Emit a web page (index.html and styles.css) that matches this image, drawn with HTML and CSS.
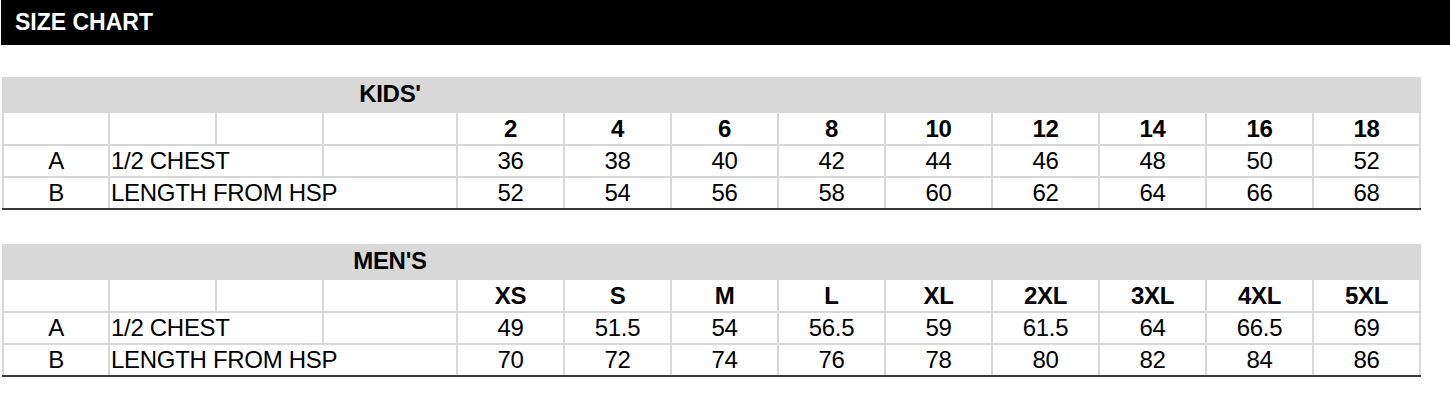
FILE: index.html
```html
<!DOCTYPE html>
<html lang="en">
<head>
<meta charset="utf-8">
<title>Size Chart</title>
<link rel="stylesheet" href="styles.css">
</head>
<body>
<header class="bar"><h1 class="bar-title">SIZE CHART</h1></header>

<section class="chart">
  <div class="cell head span-3"></div>
  <div class="cell head title">KIDS'</div>
  <div class="cell head span-rest"></div>

  <div class="cell"></div><div class="cell"></div><div class="cell"></div><div class="cell"></div>
  <div class="cell size">2</div><div class="cell size">4</div><div class="cell size">6</div><div class="cell size">8</div><div class="cell size">10</div><div class="cell size">12</div><div class="cell size">14</div><div class="cell size">16</div><div class="cell size">18</div>

  <div class="cell code">A</div><div class="cell label span-2">1/2 CHEST</div><div class="cell"></div>
  <div class="cell num">36</div><div class="cell num">38</div><div class="cell num">40</div><div class="cell num">42</div><div class="cell num">44</div><div class="cell num">46</div><div class="cell num">48</div><div class="cell num">50</div><div class="cell num">52</div>

  <div class="cell code">B</div><div class="cell label span-3b">LENGTH FROM HSP</div>
  <div class="cell num">52</div><div class="cell num">54</div><div class="cell num">56</div><div class="cell num">58</div><div class="cell num">60</div><div class="cell num">62</div><div class="cell num">64</div><div class="cell num">66</div><div class="cell num">68</div>
</section>

<section class="chart">
  <div class="cell head span-3"></div>
  <div class="cell head title">MEN'S</div>
  <div class="cell head span-rest"></div>

  <div class="cell"></div><div class="cell"></div><div class="cell"></div><div class="cell"></div>
  <div class="cell size">XS</div><div class="cell size">S</div><div class="cell size">M</div><div class="cell size">L</div><div class="cell size">XL</div><div class="cell size">2XL</div><div class="cell size">3XL</div><div class="cell size">4XL</div><div class="cell size">5XL</div>

  <div class="cell code">A</div><div class="cell label span-2">1/2 CHEST</div><div class="cell"></div>
  <div class="cell num">49</div><div class="cell num">51.5</div><div class="cell num">54</div><div class="cell num">56.5</div><div class="cell num">59</div><div class="cell num">61.5</div><div class="cell num">64</div><div class="cell num">66.5</div><div class="cell num">69</div>

  <div class="cell code">B</div><div class="cell label span-3b">LENGTH FROM HSP</div>
  <div class="cell num">70</div><div class="cell num">72</div><div class="cell num">74</div><div class="cell num">76</div><div class="cell num">78</div><div class="cell num">80</div><div class="cell num">82</div><div class="cell num">84</div><div class="cell num">86</div>
</section>
</body>
</html>
```

FILE: styles.css
```css
html, body {
  margin: 0;
  padding: 0;
  background: #ffffff;
}

body {
  font-family: "Liberation Sans", Arial, sans-serif;
  color: #000000;
}

.bar {
  margin-left: 1px;
  height: 45px;
  background: #000000;
  display: flex;
  align-items: center;
}

.bar-title {
  margin: 0;
  padding-left: 14px;
  color: #ffffff;
  font-size: 23px;
  font-weight: 700;
  line-height: 45px;
  letter-spacing: 0;
}

.chart {
  margin: 32px 0 0 2px;
  width: 1419px;
  box-sizing: border-box;
  display: grid;
  grid-template-columns: 104px 105px 105px 132px repeat(9, 105px);
  grid-template-rows: 34px 31px 30px 30px;
  gap: 2px;
  padding: 0 2px;
  background: #d8d8d8;
  border-bottom: 2px solid #3a3a3a;
}

.chart + .chart {
  margin-top: 34px;
}

.cell {
  background: #ffffff;
  font-size: 24px;
  letter-spacing: -0.3px;
  line-height: 30px;
  display: flex;
  align-items: center;
  justify-content: center;
  white-space: nowrap;
}

.head {
  background: #d8d8d8;
}

.title {
  font-weight: 700;
}

.span-3 {
  grid-column: 1 / span 3;
}

.span-rest {
  grid-column: 5 / span 9;
}

.span-2 {
  grid-column: 2 / span 2;
}

.span-3b {
  grid-column: 2 / span 3;
}

.size {
  font-weight: 700;
}

.label {
  justify-content: flex-start;
  padding-left: 1px;
}
```
